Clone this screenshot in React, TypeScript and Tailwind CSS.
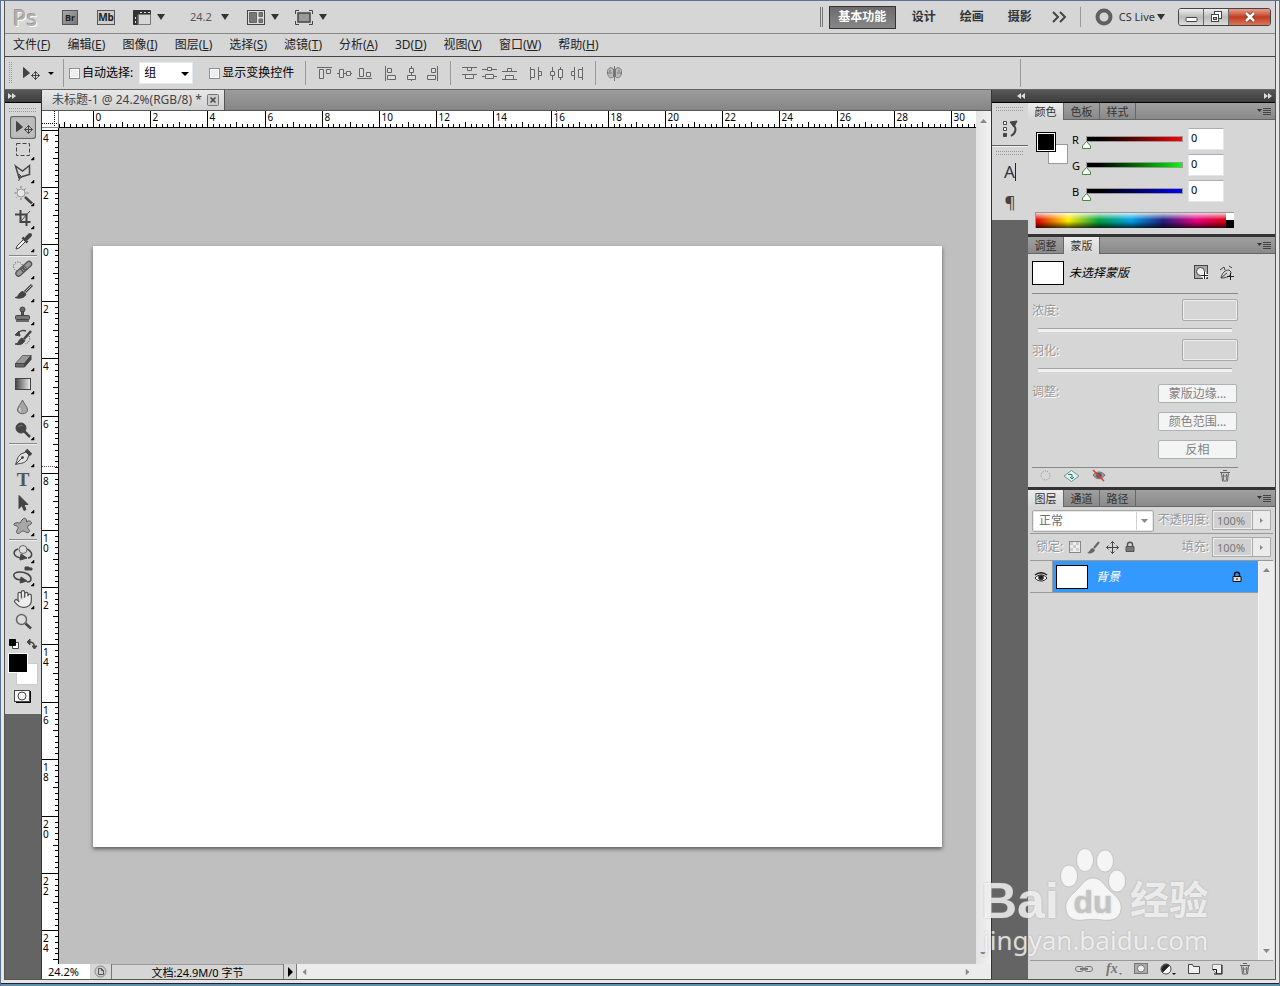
import { useEffect, useRef, useState } from "react";
import type { ReactNode } from "react";
import clsx from "clsx";
import { Hand } from "lucide-react";

type IconProps = { children: ReactNode; w?: number; h?: number };

const Icon = ({ children, w = 20, h = 16 }: IconProps) => (
    <svg
        width={w}
        height={h}
        viewBox={`0 0 ${w} ${h}`}
        fill="none"
        stroke="#444"
        aria-hidden="true"
        className="shrink-0"
    >
        {children}
    </svg>
);

const Caret = () => (
    <svg width="8" height="6" viewBox="0 0 8 6" aria-hidden="true" className="shrink-0">
        <path d="M0 0h8L4 6z" fill="#333" />
    </svg>
);

const Cross = ({ x, y, r = 4 }: { x: number; y: number; r?: number }) => (
    <g transform={`translate(${x} ${y})`} stroke="#444">
        <path d={`M${-r} 0H${r}M0 ${-r}V${r}`} />
        <path
            d={`M-2 ${2 - r}L0 ${-r}L2 ${2 - r}M-2 ${r - 2}L0 ${r}L2 ${r - 2}M${2 - r} -2L${-r} 0L${2 - r} 2M${r - 2} -2L${r} 0L${r - 2} 2`}
        />
    </g>
);

const menus = [
    ["文件", "F"],
    ["编辑", "E"],
    ["图像", "I"],
    ["图层", "L"],
    ["选择", "S"],
    ["滤镜", "T"],
    ["分析", "A"],
    ["3D", "D"],
    ["视图", "V"],
    ["窗口", "W"],
    ["帮助", "H"],
];

const workspaces = ["基本功能", "设计", "绘画", "摄影"];

/* Toolbox glyphs, each on a 26 x 23 grid */
const tools: { name: string; art: ReactNode; plain?: boolean }[][] = [
    [
        {
            name: "移动工具",
            plain: true,
            art: (
                <>
                    <path d="M6.5 5.5v10l6-4.5z" fill="#444" />
                    <Cross x={18.5} y={13.5} />
                </>
            ),
        },
        {
            name: "矩形选框工具",
            art: <rect x="6.5" y="4.5" width="13" height="12" strokeDasharray="4 2" />,
        },
        {
            name: "多边形套索工具",
            art: (
                <>
                    <path d="M5.500 4L12.500 9l7-5.500v9L9 15.500z" strokeWidth="1.500" />
                    <path d="M9 12l3 3-3 1.500zM10 16l-1.500 3" />
                </>
            ),
        },
        {
            name: "魔棒工具",
            art: (
                <>
                    <path d="M11 1v14M4.500 8h14M6.500 3.500l9 9M15.500 3.500l-9 9" stroke="#777" strokeDasharray="2 1" />
                    <circle cx="11" cy="8" r="4" fill="#e6e6e6" stroke="#999" />
                    <path d="M15 12l7 6.500" stroke="#444" strokeWidth="2.500" />
                </>
            ),
        },
        {
            name: "裁剪工具",
            art: (
                <>
                    <path d="M10.500 2v12h10M5 6.500h11.500V18" strokeWidth="2" />
                    <path d="M20 3l-9 10" />
                </>
            ),
        },
        {
            name: "吸管工具",
            art: (
                <>
                    <path d="M6 18l1-3 7-7 2 2-7 7z" fill="#f2f2f2" />
                    <path d="M12.500 6.500l5 5M15 9l4-4" strokeWidth="2.500" />
                    <path d="M17 7l3-3" strokeWidth="4" strokeLinecap="round" />
                </>
            ),
        },
    ],
    [
        {
            name: "污点修复画笔工具",
            art: (
                <>
                    <circle cx="8" cy="8.500" r="4.500" strokeDasharray="1 1.500" />
                    <path d="M8.500 15.500L19 6" stroke="#555" strokeWidth="6.500" strokeLinecap="round" />
                    <path d="M8.500 15.500L19 6" stroke="#999" strokeWidth="4" strokeLinecap="round" />
                    <path d="M11.500 13l4.500-4" stroke="#5a5a5a" strokeWidth="5" />
                    <path d="M12.500 11.500l1 1M14.500 9.500l1 1" stroke="#ddd" />
                </>
            ),
        },
        {
            name: "画笔工具",
            art: (
                <>
                    <path d="M15 11l7-7" strokeWidth="3" />
                    <path d="M15.500 10.500l6-6" stroke="#bbb" />
                    <path d="M5 16.500c4 0 3-5.500 8-6l3 2.500c-1 4-7 5-11 3.500z" fill="#444" />
                </>
            ),
        },
        {
            name: "仿制图章工具",
            art: (
                <>
                    <circle cx="12.500" cy="5.500" r="2.500" fill="#666" />
                    <path d="M11.500 7.500h2v4h-2z" fill="#555" />
                    <rect x="5.500" y="11.500" width="14" height="4" rx="1" fill="#777" />
                    <path d="M6 17h13" strokeWidth="1.500" />
                </>
            ),
        },
        {
            name: "历史记录画笔工具",
            art: (
                <>
                    <path d="M7 7c3-4 7-4 9-3" strokeWidth="1.500" />
                    <path d="M9 4L5 8l5 1z" fill="#444" />
                    <path d="M14 12l7-8" strokeWidth="2.500" />
                    <path d="M5 17c4 0 3-4.500 7-6l3 2.500c-2 4-6 5-10 3.500z" fill="#444" />
                    <path d="M19 9c2 3 0 7-4 8" strokeDasharray="1 1.500" />
                </>
            ),
        },
        {
            name: "橡皮擦工具",
            art: (
                <>
                    <path d="M5.500 13.500L12.500 5.500h8.500l-6.500 8z" fill="#999" stroke="#666" />
                    <path d="M14.500 13.500L21 5.500v4l-6.500 7.500z" fill="#444" />
                    <path d="M5.500 13.500h9V17h-9z" fill="#666" />
                </>
            ),
        },
        {
            name: "渐变工具",
            art: (
                <>
                    <defs>
                        <linearGradient id="toolGradient">
                            <stop offset="0" stopColor="#444" />
                            <stop offset="1" stopColor="#f0f0f0" />
                        </linearGradient>
                    </defs>
                    <rect x="5.500" y="5.500" width="15" height="11" fill="url(#toolGradient)" />
                </>
            ),
        },
        {
            name: "模糊工具",
            art: (
                <>
                    <path d="M12.500 4C11 8 7.500 10.500 7.500 14c0 5 10 5 10 0 0-3.500-3.500-6-5-10z" fill="#a5a5a5" stroke="#666" />
                    <path d="M10 12c-1 2 0 3 1 3.500" stroke="#eee" />
                </>
            ),
        },
        {
            name: "减淡工具",
            art: (
                <>
                    <path d="M14 12l6 6" strokeWidth="2.500" />
                    <circle cx="11" cy="9" r="5" fill="#444" />
                    <path d="M8.500 8c1-2 3-2 4-1" stroke="#888" />
                </>
            ),
        },
    ],
    [
        {
            name: "钢笔工具",
            art: (
                <>
                    <path d="M5.500 18.500C7 15 7 11 11 8l5-2 3 3-2 5c-3 4-7 3-11.500 4.500z" fill="#e3e3e3" />
                    <path d="M6 18l6-6" />
                    <circle cx="12.500" cy="11.500" r="1" fill="#444" />
                    <path d="M16 4l5 5" strokeWidth="3.500" />
                </>
            ),
        },
        {
            name: "横排文字工具",
            art: (
                <text
                    x="13"
                    y="17"
                    textAnchor="middle"
                    stroke="none"
                    fill="#555"
                    className="font-['Liberation_Serif',serif] text-[19px] font-bold"
                >
                    T
                </text>
            ),
        },
        {
            name: "路径选择工具",
            art: <path d="M9 3.500v13l3-3 2 5 2-1-2-5h4z" fill="#444" />,
        },
        {
            name: "自定形状工具",
            art: (
                <path
                    d="M13 4c2-2 4 0 3.500 3 2-2 5-1 5 1s-4 2-4 4 3 3 1.500 5-4-1-6-1-4 4-6 2 2-4 1-6-5-1-4-3 5-1 6-1 1-3 3-4z"
                    fill="#a8a8a8"
                    stroke="#555"
                />
            ),
        },
    ],
    [
        {
            name: "3D 对象旋转工具",
            art: (
                <>
                    <path d="M8 7C2 9 3 15 11 16M17 7c6 3 6 8 1 9" strokeWidth="1.500" />
                    <path d="M11 12l6 4-7 2z" fill="#444" />
                    <circle cx="13" cy="7.500" r="4" fill="#ddd" stroke="#666" />
                </>
            ),
        },
        {
            name: "3D 旋转相机工具",
            art: (
                <>
                    <path d="M12 15C3 15 0 7 10 7c6 0 11 3 11 7 0 2-2 3-4 3" strokeWidth="1.500" />
                    <path d="M11 12l6 4-7 2z" fill="#444" />
                    <path d="M15 2h4v3h-4zM19 3h3v2h-3z" fill="#444" />
                </>
            ),
        },
        {
            name: "抓手工具",
            art: <Hand x="3" y="1" width="20" height="20" strokeWidth={1.5} color="#555" fill="#eee" />,
        },
        {
            name: "缩放工具",
            plain: true,
            art: (
                <>
                    <circle cx="11.500" cy="8.500" r="5" fill="#ddd" stroke="#666" strokeWidth="1.500" />
                    <path d="M15.500 12.500l5.500 5" strokeWidth="2.500" />
                </>
            ),
        },
    ],
];

const Toolbox = () => {
    const [active, setActive] = useState("移动工具");

    return (
        <aside className="flex w-9 shrink-0 flex-col bg-[#646464]">
            <PaneHeader>
                <Chevrons />
            </PaneHeader>
            <div className="flex flex-col items-center bg-[#d6d6d6] pt-px pb-2.5">
                <Grip />
                {tools.map((group, i) => (
                    <div key={i} className="flex flex-col items-center">
                        {i > 0 && <div className="my-px h-0.5 w-7 border-t border-[#888] bg-[#f0f0f0]" />}
                        {group.map((tool) => (
                            <button
                                key={tool.name}
                                type="button"
                                aria-label={tool.name}
                                onClick={() => setActive(tool.name)}
                                className={clsx(
                                    "h-[23px] w-[26px] rounded-[3px]",
                                    active === tool.name &&
                                        "bg-[#bdbdbd] shadow-[inset_0_0_0_1px_#666,inset_0_0_3px_#777]"
                                )}
                            >
                                <Icon w={26} h={23}>
                                    {tool.art}
                                    {!tool.plain && <path d="M24 18v3h-3z" fill="#000" stroke="#000" strokeWidth="0.500" />}
                                </Icon>
                            </button>
                        ))}
                    </div>
                ))}
                <div className="flex h-[19px] w-[30px] items-center justify-between">
                    <button type="button" aria-label="默认前景色和背景色">
                        <Icon w={12} h={12}>
                            <path d="M4.500 4.500h6v6h-6z" fill="#fff" />
                            <path d="M1.500 1.500h6v6h-6z" fill="#000" stroke="#000" />
                        </Icon>
                    </button>
                    <button type="button" aria-label="切换前景色和背景色">
                        <Icon w={12} h={12}>
                            <path d="M3 4c4 0 5 1 5.500 5" strokeWidth="1.500" />
                            <path d="M1 4l3-3v6zM6 8h5l-2.500 3z" fill="#444" />
                        </Icon>
                    </button>
                </div>
                <div className="relative h-8 w-[30px]">
                    <button
                        type="button"
                        aria-label="背景色"
                        className="absolute right-0 bottom-0 h-[22px] w-[22px] border border-[#ccc] bg-white"
                    />
                    <button
                        type="button"
                        aria-label="前景色"
                        className="absolute top-0 left-0 h-5 w-5 border border-white bg-black"
                    />
                </div>
                <button type="button" aria-label="以快速蒙版模式编辑" className="mt-1">
                    <Icon w={18} h={15}>
                        <path d="M2 13.500h14.500V2" stroke="#000" />
                        <rect x="0.500" y="1.500" width="15" height="11" fill="#f5f5f5" />
                        <circle cx="8" cy="7" r="4" />
                    </Icon>
                </button>
            </div>
        </aside>
    );
};

const Chevrons = ({ left }: { left?: boolean }) => (
    <svg width="8" height="6" viewBox="0 0 8 6" className={clsx(left && "rotate-180")} aria-hidden="true">
        <path d="M0 0l4 3-4 3zM4 0l4 3-4 3z" fill="#ddd" />
    </svg>
);

const Grip = () => (
    <div className="flex h-3 items-center">
        <svg width="28" height="4" viewBox="0 0 28 4" aria-hidden="true">
            <path d="M0 .5h28M0 3.500h28" stroke="#999" strokeDasharray="1 1" />
        </svg>
    </div>
);

const PaneHeader = ({ children }: { children: ReactNode }) => (
    <div className="flex h-[13px] shrink-0 items-center justify-between border-b border-black bg-linear-to-b from-[#585858] to-[#3e3e3e] px-[3px]">
        {children}
    </div>
);

const AppBar = () => (
    <header className="flex h-[33px] shrink-0 items-center justify-between border-b border-[#888] bg-[#d6d6d6] pr-1 pl-2">
        <div className="flex items-center">
            <span className="w-[49px] text-[22px] leading-6 font-medium text-[#b0b0b0] [text-shadow:1px_1px_0_#fff,-1px_-1px_0_#999]">
                Ps
            </span>
            <button
                type="button"
                className="h-[15px] w-4 border border-[#555] bg-linear-to-br from-[#aaa] to-[#777] text-center text-[9px] leading-[13px] font-bold text-[#222]"
            >
                Br
            </button>
            <button
                type="button"
                className="ml-[19px] h-[15px] w-[18px] border border-[#555] bg-[#ccc] text-center text-[10px] leading-[13px] font-bold text-[#222]"
            >
                Mb
            </button>
            <button type="button" aria-label="查看额外内容" className="ml-[18px] flex items-center gap-1.5">
                <Icon w={18} h={15}>
                    <path d="M.5 .5h17v4H5v10H.5z" fill="#333" stroke="#333" />
                    <path d="M7 2.500h10M2.500 7v7" stroke="#ddd" strokeDasharray="2 2" />
                    <path d="M5 4.500h12.500v10H5z" stroke="#777" />
                </Icon>
                <Caret />
            </button>
            <button type="button" className="ml-[25px] flex items-center gap-[9px] text-[11px] text-[#555]">
                24.2
                <Caret />
            </button>
            <button type="button" aria-label="排列文档" className="ml-[18px] flex items-center gap-1.5">
                <Icon w={18} h={15}>
                    <rect x="0.500" y="0.500" width="17" height="14" fill="#ddd" />
                    <path d="M2.500 2.500h7v10h-7zM12 2.500h3.500v4H12zM12 9h3.500v3.500H12z" fill="#777" stroke="#666" />
                </Icon>
                <Caret />
            </button>
            <button type="button" aria-label="屏幕模式" className="ml-4 flex items-center gap-1.5">
                <Icon w={18} h={15}>
                    <path d="M.5 4V.5H4M14 .5h3.500V4M17.500 11v3.500H14M4 14.500H.5V11" />
                    <rect x="3" y="3" width="12" height="9" fill="#999" strokeWidth="1.500" />
                </Icon>
                <Caret />
            </button>
        </div>
        <div className="flex items-center">
            <div className="h-5 w-[3px] border-x border-[#777]" />
            <nav className="ml-1.5 flex items-center">
                {workspaces.map((name, i) => (
                    <button
                        key={name}
                        type="button"
                        className={clsx(
                            "h-[23px] text-[12px] font-bold",
                            i === 0
                                ? "mr-1 w-[67px] border border-[#333] bg-linear-to-b from-[#6c6c6c] to-[#878787] text-white"
                                : "w-12 text-[#333]"
                        )}
                    >
                        {name}
                    </button>
                ))}
            </nav>
            <button type="button" aria-label="更多工作区" className="ml-2">
                <Icon w={16} h={12}>
                    <path d="M1 1l5 5-5 5M8 1l5 5-5 5" strokeWidth="2" />
                </Icon>
            </button>
            <div className="ml-3 h-5 w-px bg-[#999]" />
            <button type="button" className="ml-3.5 flex items-center text-[#333]">
                <Icon w={18} h={18}>
                    <circle cx="9" cy="9" r="6.500" strokeWidth="4" stroke="#606060" />
                </Icon>
                <span className="mr-0.5 ml-1.5 text-[11px]">CS Live</span>
                <Caret />
            </button>
            <div className="ml-[13px] flex h-[18px] overflow-hidden rounded-[3px] border border-[#444]">
                <button type="button" aria-label="最小化" className="flex w-[25px] items-center justify-center border-r border-[#666] bg-linear-to-b from-[#eee] via-[#bbb] to-[#ddd]">
                    <Icon w={13} h={14}>
                        <rect x="1" y="7.500" width="11" height="4" rx="1" fill="#fff" />
                    </Icon>
                </button>
                <button type="button" aria-label="还原" className="flex w-[25px] items-center justify-center border-r border-[#666] bg-linear-to-b from-[#eee] via-[#bbb] to-[#ddd]">
                    <Icon w={13} h={14}>
                        <rect x="4.500" y="1.500" width="7" height="7" fill="#fff" />
                        <rect x="1.500" y="4.500" width="7" height="7" fill="#fff" />
                        <rect x="3.500" y="7.500" width="3" height="2" fill="#bbb" />
                    </Icon>
                </button>
                <button type="button" aria-label="关闭" className="flex w-[41px] items-center justify-center bg-linear-to-b from-[#e5a08e] via-[#c23a20] to-[#da7458]">
                    <Icon w={14} h={12}>
                        <path d="M3 2l8 8M11 2l-8 8" stroke="#703030" strokeWidth="4" />
                        <path d="M3 2l8 8M11 2l-8 8" stroke="#fff" strokeWidth="2.500" />
                    </Icon>
                </button>
            </div>
        </div>
    </header>
);

const MenuBar = () => (
    <nav className="flex h-[23px] shrink-0 items-center gap-[17px] border-b border-[#444] bg-[#d6d6d6] pl-2 text-[12px] text-[#222]">
        {menus.map(([label, key]) => (
            <button key={key} type="button">
                {label}(<u>{key}</u>)
            </button>
        ))}
    </nav>
);

const Divider = () => <div className="h-6 w-px shrink-0 bg-[#999]" />;

const alignArt: { name: string; art: ReactNode }[][] = [
    [
        { name: "顶对齐", art: <><path d="M1 2.500h15" /><path d="M3.500 4.500h4v9h-4zM10.500 4.500h4v4h-4z" fill="#ddd" /></> },
        { name: "垂直居中对齐", art: <><path d="M1 8.500h15" /><path d="M3.500 4.500h4v8h-4zM10.500 6.500h4v4h-4z" fill="#ddd" /></> },
        { name: "底对齐", art: <><path d="M1 13.500h15" /><path d="M3.500 3.500h4v8h-4zM10.500 7.500h4v4h-4z" fill="#ddd" /></> },
    ],
    [
        { name: "左对齐", art: <><path d="M2.500 1v15" /><path d="M4.500 3.500h4v4h-4zM4.500 10.500h8v4h-8z" fill="#ddd" /></> },
        { name: "水平居中对齐", art: <><path d="M8.500 1v15" /><path d="M6.500 3.500h4v4h-4zM4.500 10.500h8v4h-8z" fill="#ddd" /></> },
        { name: "右对齐", art: <><path d="M14.500 1v15" /><path d="M8.500 3.500h4v4h-4zM4.500 10.500h8v4h-8z" fill="#ddd" /></> },
    ],
    [
        { name: "按顶分布", art: <><path d="M1 2.500h15M1 9.500h15" /><path d="M6.500 2.500h4v3h-4zM4.500 9.500h8v4h-8z" fill="#ddd" /></> },
        { name: "垂直居中分布", art: <><path d="M1 4.500h15M1 11.500h15" /><path d="M6.500 2.500h4v3h-4zM4.500 9.500h8v4h-8z" fill="#ddd" /></> },
        { name: "按底分布", art: <><path d="M1 6.500h15M1 14.500h15" /><path d="M6.500 3.500h4v3h-4zM4.500 10.500h8v4h-8z" fill="#ddd" /></> },
    ],
    [
        { name: "按左分布", art: <><path d="M2.500 2v13M10.500 2v13" /><path d="M2.500 4.500h4v8h-4zM10.500 6.500h3v4h-3z" fill="#ddd" /></> },
        { name: "水平居中分布", art: <><path d="M4.500 2v13M12.500 2v13" /><path d="M2.500 6.500h4v4h-4zM10.500 4.500h4v8h-4z" fill="#ddd" /></> },
        { name: "按右分布", art: <><path d="M6.500 2v13M14.500 2v13" /><path d="M3.500 6.500h3v4h-3zM10.500 4.500h4v8h-4z" fill="#ddd" /></> },
    ],
];

const AlignGroup = ({ index }: { index: number }) => (
    <div className="flex gap-[3px]">
        {alignArt[index].map(({ name, art }) => (
            <button key={name} type="button" aria-label={name}>
                <svg width="17" height="17" viewBox="0 0 17 17" fill="none" stroke="#666" aria-hidden="true">
                    {art}
                </svg>
            </button>
        ))}
    </div>
);

const CheckOption = ({ label }: { label: string }) => (
    <label className="flex items-center gap-0.5 text-[12px] text-black">
        <input
            type="checkbox"
            className="h-[11px] w-[11px] appearance-none border border-[#8e8f8f] bg-[#eee] shadow-[inset_0_0_0_1px_#fff] checked:bg-[#4a6a9a]"
        />
        {label}
    </label>
);

const OptionsBar = () => (
    <div className="flex h-[33px] shrink-0 items-center border-b border-[#666] bg-[#d6d6d6]">
        <svg width="3" height="22" viewBox="0 0 3 22" className="ml-1" aria-hidden="true">
            <path d="M.5 0v22M2.500 0v22" stroke="#999" strokeDasharray="1 1" />
        </svg>
        <button type="button" aria-label="移动工具预设" className="ml-2.5 flex items-center gap-1.5">
            <Icon w={20} h={20}>
                <path d="M1.500 4.500v10l6-4.500z" fill="#444" />
                <Cross x={13.5} y={12.5} />
            </Icon>
            <svg width="6" height="3" viewBox="0 0 6 3" aria-hidden="true">
                <path d="M0 0h6L3 3z" />
            </svg>
        </button>
        <div className="mr-[5px] ml-[9px] h-7 w-px bg-[#999]" />
        <CheckOption label="自动选择:" />
        <div className="relative ml-1.5">
            <select
                aria-label="自动选择"
                className="block h-[22px] w-[54px] appearance-none border border-[#e3e9ef] bg-white pl-1 text-[12px] text-black"
            >
                <option>组</option>
                <option>图层</option>
            </select>
            <svg
                width="8"
                height="4"
                viewBox="0 0 8 4"
                className="pointer-events-none absolute top-2.5 right-1"
                aria-hidden="true"
            >
                <path d="M0 0h8L4 4z" />
            </svg>
        </div>
        <div className="ml-4">
            <CheckOption label="显示变换控件" />
        </div>
        <div className="ml-[11px] flex items-center gap-2.5">
            <Divider />
            <AlignGroup index={0} />
            <AlignGroup index={1} />
            <Divider />
            <AlignGroup index={2} />
            <AlignGroup index={3} />
            <Divider />
            <button type="button" aria-label="自动对齐图层">
                <svg width="17" height="17" viewBox="0 0 17 17" fill="none" stroke="#777" aria-hidden="true">
                    <path d="M7.500 4C4 1 1 4 1.500 8s3 6 6 4zM9.500 4c3.500-3 6.500 0 6 4s-3 6-6 4z" fill="#bbb" />
                    <path d="M8.500 1v15M2 8h4M11 8h4M4 5v2M13 5v2" />
                </svg>
            </button>
        </div>
        <div className="mr-[254px] ml-auto h-7 w-px bg-[#999]" />
    </div>
);

/* Two ruler units at 24.2% zoom */
const STEP = 57.2;
const X_ORIGIN = 35;
const Y_ORIGIN = 117;

const useSize = () => {
    const ref = useRef<HTMLDivElement>(null);
    const [size, setSize] = useState({ width: 0, height: 0 });

    useEffect(() => {
        if (!ref.current) return;
        const node = ref.current;
        const observer = new ResizeObserver(() => {
            setSize({ width: node.clientWidth, height: node.clientHeight });
        });
        observer.observe(node);
        return () => observer.disconnect();
    }, []);

    return { ref, ...size };
};

const buildTicks = (origin: number, length: number) => {
    const ticks = [];
    const first = -Math.floor((origin / STEP) * 10);
    const last = Math.floor(((length - origin) / STEP) * 10);
    for (let i = first; i <= last; i++) {
        ticks.push({ i, pos: Math.round(origin + (i * STEP) / 10) - 0.5 });
    }
    return ticks;
};

const tickSize = (i: number) => (i % 10 === 0 ? 17 : i % 5 === 0 ? 6 : 4);

const TopRuler = () => {
    const { ref, width } = useSize();

    return (
        <div ref={ref} className="h-[17px] min-w-0 flex-1 overflow-hidden bg-white">
            <svg width={width} height="17" className="block font-['Noto_Sans',sans-serif] text-[10px]" aria-hidden="true">
                {buildTicks(X_ORIGIN, width).map(({ i, pos }) => (
                    <g key={i}>
                        <path d={`M${pos} 17v${-tickSize(i)}`} stroke="#000" />
                        {i % 10 === 0 && (
                            <text x={pos + 2} y={10}>
                                {Math.abs(i / 5)}
                            </text>
                        )}
                    </g>
                ))}
                <path d="M497.500 0v17" stroke="#555" strokeDasharray="1 1" />
                <path d={`M0 16.500h${width}`} stroke="#000" />
            </svg>
        </div>
    );
};

const LeftRuler = () => {
    const { ref, height } = useSize();

    return (
        <div ref={ref} className="w-[17px] shrink-0 overflow-hidden bg-white">
            <svg width="17" height={height} className="block font-['Noto_Sans',sans-serif] text-[10px]" aria-hidden="true">
                {buildTicks(Y_ORIGIN, height).map(({ i, pos }) => (
                    <g key={i}>
                        <path d={`M17 ${pos}h${-tickSize(i)}`} stroke="#000" />
                        {i % 10 === 0 &&
                            String(Math.abs(i / 5))
                                .split("")
                                .map((digit, n) => (
                                    <text key={n} x={1} y={pos + 11 + n * 10}>
                                        {digit}
                                    </text>
                                ))}
                    </g>
                ))}
                <path d="M0 338.500h17" stroke="#555" strokeDasharray="1 1" />
                <path d={`M16.500 0v${height}`} stroke="#000" />
            </svg>
        </div>
    );
};

const ScrollArrow = ({ className }: { className?: string }) => (
    <svg width="7" height="4" viewBox="0 0 7 4" className={className} aria-hidden="true">
        <path d="M0 4h7L3.500 0z" fill="#888" />
    </svg>
);

const DocumentArea = () => (
    <main className="flex min-w-0 flex-1 flex-col border-x border-[#333]">
        <div className="flex h-5 shrink-0 bg-linear-to-b from-[#9c9c9c] to-[#868686]">
            <div className="flex items-center gap-[5px] border-r border-[#555] bg-linear-to-b from-[#e8e8e8] to-[#d0d0d0] pr-[5px] pl-2.5 text-[12px] text-[#444]">
                <span>未标题-1 @ 24.2%(RGB/8) *</span>
                <button type="button" aria-label="关闭文档">
                    <Icon w={12} h={12}>
                        <rect x="0.500" y="0.500" width="11" height="11" rx="1" stroke="#777" fill="#ccc" />
                        <path d="M3.500 3.500l5 5M8.500 3.500l-5 5" strokeWidth="1.500" />
                    </Icon>
                </button>
            </div>
        </div>
        <div className="flex min-h-0 flex-1 border-t border-[#555]">
            <div className="flex min-w-0 flex-1 flex-col">
                <div className="flex shrink-0">
                    <svg width="17" height="17" viewBox="0 0 17 17" className="shrink-0 bg-white" aria-hidden="true">
                        <path d="M0 12.500h16M12.500 0v16" stroke="#000" strokeDasharray="1 1" />
                        <path d="M0 16.500h17M16.500 0v17" stroke="#888" />
                    </svg>
                    <TopRuler />
                </div>
                <div className="flex min-h-0 flex-1">
                    <LeftRuler />
                    <div className="flex min-w-0 flex-1 items-center justify-center overflow-hidden bg-[#bfbfbf]">
                        <div className="aspect-[849/601] w-[849px] shrink-0 bg-white shadow-[0_2px_4px_#0008]" />
                    </div>
                </div>
            </div>
            <div className="flex w-[15px] shrink-0 flex-col items-center justify-between bg-linear-to-r from-[#e4e4e4] to-[#f2f2f2] py-2">
                <ScrollArrow />
                <ScrollArrow className="rotate-180" />
            </div>
        </div>
        <footer className="flex h-[15px] shrink-0 bg-[#d6d6d6] text-[11px] leading-[15px] text-black">
            <input aria-label="缩放比例" defaultValue="24.2%" className="w-12 bg-white pl-1.5" />
            <button type="button" aria-label="文档信息" className="flex w-[22px] items-center justify-center border-r border-[#777]">
                <Icon w={13} h={13}>
                    <circle cx="6.500" cy="6.500" r="5.500" stroke="#888" fill="#ccc" />
                    <path d="M4.500 3.500h3l2 2v4h-5zM7.500 3.500v2h2" stroke="#555" />
                </Icon>
            </button>
            <div className="w-[171px] border-t border-[#999] text-center">文档:24.9M/0 字节</div>
            <button type="button" aria-label="状态栏菜单" className="flex w-3.5 items-center justify-center border-x border-[#777]">
                <svg width="5" height="10" viewBox="0 0 5 10" aria-hidden="true">
                    <path d="M0 0l5 5-5 5z" />
                </svg>
            </button>
            <div className="flex flex-1 items-center justify-between bg-[#ececec] px-1">
                <ScrollArrow className="-rotate-90" />
                <ScrollArrow className="mr-4 rotate-90" />
            </div>
        </footer>
    </main>
);

const Dock = () => (
    <div className="w-9 shrink-0">
        <div className="flex h-[43px] flex-col items-center border-b border-[#666] bg-[#d6d6d6]">
            <Grip />
            <button type="button" aria-label="历史记录" className="mt-[5px]">
                <Icon w={18} h={18}>
                    <path d="M2.500 1.500h3v3h-3zM2.500 7.500h3v3h-3z" fill="#fff" />
                    <path d="M2.500 13.500h3v3h-3z" fill="#444" />
                    <path d="M9 2l7-1-3 6z" fill="#444" />
                    <path d="M12 5c4 3 3 8-2 11" strokeWidth="2" />
                </Icon>
            </button>
        </div>
        <div className="flex h-[74px] flex-col items-center border-t border-white/60 bg-[#d6d6d6]">
            <Grip />
            <button
                type="button"
                aria-label="字符"
                className="mt-1 h-[18px] border-r border-[#222] text-[17px] leading-[18px] text-[#333]"
            >
                A
            </button>
            <button type="button" aria-label="段落" className="mt-1.5 text-[17px] leading-[30px] text-[#444]">
                ¶
            </button>
        </div>
    </div>
);

const TabStrip = ({ tabs, active }: { tabs: string[]; active: number }) => (
    <div role="tablist" className="flex h-[17px] shrink-0 items-stretch bg-linear-to-b from-[#a0a0a0] to-[#888] shadow-[inset_0_-1px_0_#666]">
        {tabs.map((tab, i) => (
            <button
                key={tab}
                type="button"
                role="tab"
                aria-selected={i === active}
                className={clsx(
                    "w-9 border-r border-[#666] text-[11px] leading-[17px] text-[#333]",
                    i === active && "bg-linear-to-b from-[#ececec] to-[#d6d6d6]"
                )}
            >
                {tab}
            </button>
        ))}
        <button type="button" aria-label="面板菜单" className="mr-1 ml-auto">
            <Icon w={14} h={9}>
                <path d="M0 2h5L2.500 5z" fill="#333" stroke="none" />
                <path d="M6 1.500h8M6 3.500h8M6 5.500h8M6 7.500h8" />
            </Icon>
        </button>
    </div>
);

const channels = [
    { name: "R", track: "from-black to-[#f00]" },
    { name: "G", track: "from-black to-[#0f0]" },
    { name: "B", track: "from-black to-[#00f]" },
];

const ColorPanel = () => {
    const [values, setValues] = useState([0, 0, 0]);

    const update = (index: number, value: number) => {
        setValues((prev) => prev.map((v, i) => (i === index ? value : v)));
    };

    return (
        <section>
            <TabStrip tabs={["颜色", "色板", "样式"]} active={0} />
            <div className="h-[114px] px-[7px] pt-2">
                <div className="flex">
                    <div className="relative mt-1 ml-px h-8 w-8 shrink-0">
                        <button
                            type="button"
                            aria-label="设置背景色"
                            className="absolute right-0 bottom-0 h-5 w-5 border border-[#999] bg-white"
                        />
                        <button
                            type="button"
                            aria-label="设置前景色"
                            className="absolute top-0 left-0 h-5 w-5 border border-black bg-black shadow-[inset_0_0_0_1px_#fff]"
                        />
                    </div>
                    <div className="ml-1 flex flex-col gap-1">
                        {channels.map(({ name, track }, i) => (
                            <div key={name} className="flex h-[22px] items-center">
                                <label htmlFor={`channel-${name}`} className="w-3.5 pt-0.5 text-[11px] text-black">
                                    {name}
                                </label>
                                <div className={clsx("relative h-1.5 w-[97px] border border-[#999] bg-linear-to-r", track)}>
                                    <svg
                                        width="9"
                                        height="8"
                                        viewBox="0 0 9 8"
                                        className="absolute top-1 -ml-[5px]"
                                        style={{ left: `${(values[i] / 255) * 100}%` }}
                                        aria-hidden="true"
                                    >
                                        <path d="M.5 7.500V5L4.500.5l4 4.500v2.500z" fill="#fff" stroke="#484" />
                                    </svg>
                                    <input
                                        type="range"
                                        aria-label={`${name} 滑块`}
                                        min={0}
                                        max={255}
                                        value={values[i]}
                                        onChange={(e) => update(i, Number(e.target.value))}
                                        className="absolute inset-0 h-3 w-full opacity-0"
                                    />
                                </div>
                                <input
                                    id={`channel-${name}`}
                                    value={values[i]}
                                    onChange={(e) => update(i, Number(e.target.value) || 0)}
                                    className="ml-[5px] h-[22px] w-9 border border-[#e4e6ee] border-t-[#abadb3] bg-white px-0.5 pb-[3px] text-[11px] text-black"
                                />
                            </div>
                        ))}
                    </div>
                </div>
                <div className="mt-2.5 flex h-4 w-[199px] border-t border-l border-[#999]">
                    <div className="flex-1 bg-[linear-gradient(to_bottom,#fffc,#fff0_45%,#0000_55%,#000b),linear-gradient(to_right,#e00000,#ffee00_17%,#00a040_33%,#00a0e8_50%,#202080_67%,#e40080_84%,#e00010)]" />
                    <div className="w-2 bg-linear-to-b from-white from-50% to-black to-50%" />
                </div>
            </div>
        </section>
    );
};

const MaskField = ({ label, id }: { label: string; id: string }) => (
    <div className="h-10">
        <div className="flex h-[22px] items-center justify-between">
            <label htmlFor={id} className="pt-0.5 text-[12px] text-[#999] [text-shadow:1px_1px_0_#fff]">
                {label}
            </label>
            <input
                id={id}
                disabled
                className="h-[22px] w-14 rounded-[2px] border border-[#a9a9a9] bg-[#d6d6d6] shadow-[inset_0_0_0_1px_#eee]"
            />
        </div>
        <div className="relative mx-1.5 mt-[7px] h-1 border-t border-[#a5a5a5] bg-[#f0f0f0]">
            <input type="range" disabled aria-label={`${label}滑块`} className="absolute inset-0 h-1 w-full opacity-0" />
        </div>
    </div>
);

const Trash = () => (
    <Icon w={12} h={13}>
        <path d="M1 3.500h10M4 1.500h4M2.500 4l1 8h5l1-8" fill="#ccc" stroke="#666" />
        <path d="M4.500 5v6M7.500 5v6M3 7h6" stroke="#777" />
    </Icon>
);

const MaskPanel = () => (
    <section>
        <TabStrip tabs={["调整", "蒙版"]} active={1} />
        <div className="h-[233px] pl-1">
            <div className="w-[206px]">
                <div className="flex h-10 items-center border-b border-[#888] pb-0.5">
                    <div className="h-6 w-8 border border-black bg-white" />
                    <span className="ml-[5px] text-[12px] text-black italic">未选择蒙版</span>
                    <button type="button" aria-label="添加像素蒙版" className="ml-auto">
                        <Icon w={15} h={15}>
                            <rect x="0.500" y="0.500" width="13" height="13" fill="#aaa" />
                            <circle cx="6.500" cy="6.500" r="4" fill="#eee" />
                            <path d="M10.500 7v7M7 10.500h7" stroke="#fff" strokeWidth="3" />
                            <path d="M10.500 7v7M7 10.500h7" stroke="#222" />
                        </Icon>
                    </button>
                    <button type="button" aria-label="添加矢量蒙版" className="mr-[3px] ml-2.5">
                        <Icon w={16} h={15}>
                            <path d="M1 5l4-3 1 3M10 1l3 2M2 13c1-5 4-8 8-8l2 2c0 4-4 6-10 6zM2 13l6-5" />
                            <path d="M11.500 8v7M8 11.500h7" stroke="#222" />
                        </Icon>
                    </button>
                </div>
                <div className="pt-[5px]">
                    <MaskField label="浓度:" id="mask-density" />
                    <MaskField label="羽化:" id="mask-feather" />
                </div>
                <div className="flex justify-between pt-[5px] pr-px">
                    <span className="text-[12px] text-[#999] [text-shadow:1px_1px_0_#fff]">调整:</span>
                    <div className="flex flex-col gap-[9px]">
                        {["蒙版边缘...", "颜色范围...", "反相"].map((name) => (
                            <button
                                key={name}
                                type="button"
                                disabled
                                className="h-[19px] w-[79px] rounded-[2px] border border-[#adb2b5] bg-[#f4f4f4] text-[12px] leading-4 text-[#838383]"
                            >
                                {name}
                            </button>
                        ))}
                    </div>
                </div>
                <div className="mt-2 flex h-4 items-center border-t border-[#888] pl-2">
                    <button type="button" aria-label="从蒙版中载入选区">
                        <Icon w={11} h={11}>
                            <circle cx="5.500" cy="5.500" r="4.500" stroke="#888" strokeDasharray="1 1.500" />
                        </Icon>
                    </button>
                    <button type="button" aria-label="应用蒙版" className="ml-3">
                        <Icon w={17} h={12}>
                            <path d="M8.500 .5l7.500 5.500-7.500 5.500L1 6z" fill="#e4f0ea" stroke="#6a9a8a" />
                            <path d="M5 4.500h4V9M7 7l2 2 2-2" stroke="#278" />
                        </Icon>
                    </button>
                    <button type="button" aria-label="停用蒙版" className="ml-3">
                        <Icon w={14} h={13}>
                            <path d="M1 6c3-4 9-4 12 0-3 5-9 5-12 0z" fill="#999" stroke="#777" />
                            <circle cx="7" cy="6.500" r="2.500" fill="#555" stroke="#666" />
                            <path d="M1 1l11 11" stroke="#e33" strokeWidth="1.500" />
                        </Icon>
                    </button>
                    <button type="button" aria-label="删除蒙版" className="mr-[7px] ml-auto">
                        <Trash />
                    </button>
                </div>
            </div>
        </div>
    </section>
);

const PercentField = ({ label, id }: { label: string; id: string }) => (
    <div className="ml-auto flex items-center">
        <label htmlFor={id} className="mr-[3px] text-[12px] text-[#999] [text-shadow:1px_1px_0_#fff]">
            {label}
        </label>
        <input
            id={id}
            disabled
            defaultValue="100%"
            className="h-5 w-[41px] border border-[#a9a9a9] bg-[#d0d0d0] pl-1 text-[11px] text-[#777] shadow-[inset_0_0_0_1px_#eee]"
        />
        <button type="button" disabled aria-label={`${label}滑块`} className="flex h-5 w-[18px] items-center justify-center border-y border-r border-[#a9a9a9] bg-[#ebebeb]">
            <svg width="3" height="5" viewBox="0 0 3 5" aria-hidden="true">
                <path d="M0 0l3 2.500L0 5z" fill="#888" />
            </svg>
        </button>
    </div>
);

const Padlock = () => (
    <Icon w={10} h={12}>
        <path d="M2.500 5V3.500c0-3 5-3 5 0V5" strokeWidth="1.500" stroke="#555" />
        <path d="M1 5.500h8v5H1z" fill="#777" stroke="#555" />
    </Icon>
);

const layerActions: { name: string; w: number; art: ReactNode }[] = [
    {
        name: "链接图层",
        w: 18,
        art: (
            <g stroke="#777">
                <rect x="0.500" y="4.500" width="8" height="5" rx="2.500" />
                <rect x="9.500" y="4.500" width="8" height="5" rx="2.500" />
                <path d="M5 7h8" strokeWidth="2" />
            </g>
        ),
    },
    {
        name: "添加图层样式",
        w: 17,
        art: (
            <>
                <text x="1" y="11" fill="#777" stroke="none" className="font-['Liberation_Serif',serif] text-[14px] font-bold italic">
                    fx
                </text>
                <path d="M14 11h3l-1.500 2z" fill="#777" stroke="none" />
            </>
        ),
    },
    {
        name: "添加图层蒙版",
        w: 14,
        art: (
            <>
                <rect x="0.500" y="1.500" width="13" height="10" fill="#aaa" stroke="#777" />
                <circle cx="7" cy="6.500" r="3.500" fill="#eee" stroke="#777" />
            </>
        ),
    },
    {
        name: "创建新的填充或调整图层",
        w: 16,
        art: (
            <>
                <circle cx="6" cy="7" r="5" fill="#fff" />
                <path d="M9.500 3.500a5 5 0 0 0-7 7z" fill="#222" />
                <path d="M12 11h4l-2 2z" fill="#111" stroke="none" />
            </>
        ),
    },
    {
        name: "创建新组",
        w: 12,
        art: <path d="M.5 11.500v-9h4l1 2h6v7z" fill="#f0f0f0" />,
    },
    {
        name: "创建新图层",
        w: 11,
        art: (
            <>
                <path d="M.5 2.500h9v9h-5L.5 7.500z" fill="#eee" stroke="#888" />
                <path d="M.5 7.500h4v4M10 3v9H2" stroke="#111" />
            </>
        ),
    },
];

const LayersPanel = () => (
    <section className="flex min-h-0 flex-1 flex-col">
        <TabStrip tabs={["图层", "通道", "路径"]} active={0} />
        <div className="mx-0.5 flex h-[27px] items-center border-b border-[#999] pr-0.5 pl-0.5">
            <div className="relative mt-px">
                <select
                    aria-label="混合模式"
                    disabled
                    className="block h-[22px] w-[122px] appearance-none rounded-[2px] border border-[#a9a9a9] bg-white pl-1.5 text-[12px] text-[#6d6d6d] opacity-100 shadow-[inset_0_0_0_1px_#e6e6e6]"
                >
                    <option>正常</option>
                </select>
                <div className="pointer-events-none absolute inset-y-0.5 right-0.5 flex w-4 items-center justify-center border-l border-[#d0d0d0]">
                    <ScrollArrow className="rotate-180" />
                </div>
            </div>
            <PercentField label="不透明度:" id="layer-opacity" />
        </div>
        <div className="mx-0.5 flex h-[27px] items-center border-b border-[#999] pr-0.5 pl-1.5">
            <span className="text-[12px] text-[#999] [text-shadow:1px_1px_0_#fff]">锁定:</span>
            <div className="ml-1.5 flex items-center gap-1.5">
                <button type="button" disabled aria-label="锁定透明像素">
                    <Icon w={12} h={12}>
                        <rect x="0.500" y="0.500" width="11" height="11" fill="#eee" stroke="#888" />
                        <path d="M1 1h3v3H1zM7 1h3v3H7zM4 4h3v3H4zM1 7h3v3H1zM7 7h3v3H7z" fill="#ccc" stroke="none" />
                    </Icon>
                </button>
                <button type="button" disabled aria-label="锁定图像像素">
                    <Icon w={13} h={13}>
                        <path d="M7 7l5-6" strokeWidth="2" stroke="#666" />
                        <path d="M0 12c3-1 3-5 6-5l2 2c-1 3-5 4-8 3z" fill="#666" stroke="none" />
                    </Icon>
                </button>
                <button type="button" disabled aria-label="锁定位置">
                    <Icon w={13} h={13}>
                        <Cross x={6.5} y={6.5} r={6} />
                    </Icon>
                </button>
                <button type="button" disabled aria-label="锁定全部">
                    <Padlock />
                </button>
            </div>
            <PercentField label="填充:" id="layer-fill" />
        </div>
        <div className="flex min-h-0 flex-1">
            <div className="ml-0.5 min-w-0 flex-1">
                <div className="flex h-8 items-stretch border-b border-[#999]">
                    <button type="button" aria-label="指示图层可见性" className="flex w-[23px] items-center justify-center border-r border-[#999]">
                        <Icon w={14} h={10}>
                            <path d="M1 6c3-4 9-4 12 0-3 4-9 4-12 0z" fill="#fff" stroke="#222" />
                            <path d="M1 3c4-3 8-3 12 0" stroke="#222" strokeWidth="1.500" />
                            <circle cx="7" cy="5.500" r="2.500" fill="#222" />
                        </Icon>
                    </button>
                    <div className="flex flex-1 items-center bg-[#3399ff] pr-4 pl-[3px]">
                        <div className="h-6 w-8 border border-black bg-white" />
                        <span className="ml-2 text-[12px] text-white italic">背景</span>
                        <span className="ml-auto">
                            <Icon w={10} h={12}>
                                <path d="M2.500 5V3.500c0-3 5-3 5 0V5" stroke="#111" strokeWidth="1.500" />
                                <path d="M1 5.500h8v5H1z" fill="#ddd" stroke="#111" />
                                <path d="M5 7v2" stroke="#111" />
                            </Icon>
                        </span>
                    </div>
                </div>
            </div>
            <div className="mr-px flex w-4 flex-col items-center justify-between border-l border-[#f5f5f5] bg-[#ececec] py-[7px]">
                <ScrollArrow />
                <ScrollArrow className="rotate-180" />
            </div>
        </div>
        <footer className="mx-0.5 flex h-[19px] shrink-0 items-center justify-end gap-3 border-t border-[#999] pr-[22px] pb-[3px]">
            {layerActions.map(({ name, w, art }) => (
                <button key={name} type="button" aria-label={name}>
                    <Icon w={w} h={14}>
                        {art}
                    </Icon>
                </button>
            ))}
            <button type="button" aria-label="删除图层" className="ml-1">
                <Trash />
            </button>
        </footer>
    </section>
);

const Watermark = () => (
    <div className="pointer-events-none absolute right-[68px] bottom-7 w-[230px] text-white/75 select-none [text-shadow:0_0_2px_#8888]">
        <div className="flex h-[76px] items-end">
            <span className="w-[79px] font-['Liberation_Sans',sans-serif] text-[50px] leading-[42px] font-bold">Bai</span>
            <svg width="66" height="76" viewBox="0 0 66 76" aria-hidden="true">
                <g fill="#fff" fillOpacity="0.750" stroke="#999" strokeOpacity="0.400">
                    <ellipse cx="9" cy="30" rx="8.500" ry="11" />
                    <ellipse cx="25" cy="14" rx="8.500" ry="11.500" />
                    <ellipse cx="45" cy="15" rx="8.500" ry="11" />
                    <ellipse cx="57" cy="35" rx="8.500" ry="11" />
                    <path d="M33 32c-8 0-11 7-17 13-7 6-11 11-10 18 1 10 9 12 17 11 7-1 13-1 20 0 9 1 17-1 18-11 1-8-5-13-11-18-6-6-9-13-17-13z" />
                </g>
                <text x="33" y="67" textAnchor="middle" fill="#c4c4c4" className="font-['Liberation_Sans',sans-serif] text-[32px] font-bold">
                    du
                </text>
            </svg>
            <span className="ml-1 text-[39px] leading-[46px] font-bold">经验</span>
        </div>
        <div className="pl-0.5 text-[26px] leading-9">jingyan.baidu.com</div>
    </div>
);

const App = () => (
    <div className="relative flex h-screen min-h-[760px] flex-col overflow-hidden border-x border-t border-[#5b7290] bg-[#e6e6e6] font-['Noto_Sans','Noto_Sans_CJK_SC',sans-serif] leading-4">
        <div className="mx-[3px] flex min-h-0 flex-1 flex-col border-x border-b border-[#555]">
            <AppBar />
            <MenuBar />
            <OptionsBar />
            <div className="flex min-h-0 flex-1">
                <Toolbox />
                <DocumentArea />
                <div className="flex w-[283px] shrink-0 flex-col">
                    <PaneHeader>
                        <span className="ml-[22px]">
                            <Chevrons left />
                        </span>
                        <Chevrons />
                    </PaneHeader>
                    <div className="flex min-h-0 flex-1 bg-[#646464]">
                        <Dock />
                        <div className="flex min-w-0 flex-1 flex-col bg-[#d6d6d6]">
                            <ColorPanel />
                            <div className="h-[3px] shrink-0 bg-[#333]" />
                            <MaskPanel />
                            <div className="h-[3px] shrink-0 bg-[#333]" />
                            <LayersPanel />
                        </div>
                    </div>
                </div>
            </div>
        </div>
        <div className="h-[3px] shrink-0" />
        <div className="h-[3px] shrink-0 border-t border-[#223] bg-[#5f8fae]" />
        <Watermark />
    </div>
);

export default App;
